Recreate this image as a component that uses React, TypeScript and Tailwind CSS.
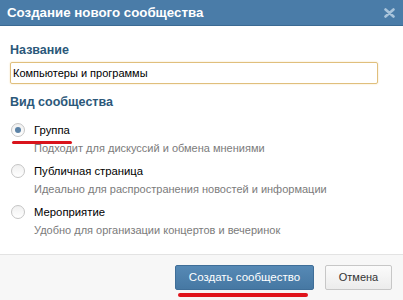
import React from "react";

function Radio({ checked }: { checked?: boolean }) {
  return (
    <div className="w-[14px] h-[14px] rounded-full border border-[#c5c5c5] bg-gradient-to-b from-[#f0f0f0] to-white flex items-center justify-center shrink-0">
      {checked && <div className="w-[6px] h-[6px] rounded-full bg-[#5b82a6]" />}
    </div>
  );
}

function Option({
  title,
  desc,
  checked,
  underline,
}: {
  title: string;
  desc: string;
  checked?: boolean;
  underline?: boolean;
}) {
  return (
    <div className="relative flex flex-col">
      <div className="flex items-center h-[18px]">
        <div className="w-[34px] pl-[11px] shrink-0">
          <Radio checked={checked} />
        </div>
        <span className="text-[11.3px] text-black">{title}</span>
      </div>
      {underline && (
        <div className="absolute left-[12px] top-[20px] w-[60px] h-[3px] rounded-full bg-[#d9141c]" />
      )}
      <div className="pl-[34px] text-[11px] text-[#7b7b7b] mt-[1px] leading-[16px]">{desc}</div>
    </div>
  );
}

export default function App() {
  return (
    <div
      className="w-[403px] h-[300px] flex flex-col bg-white overflow-hidden"
      style={{ fontFamily: '"Liberation Sans", Tahoma, sans-serif' }}
    >
      <div className="h-[26px] bg-[#4a7ca8] border-b border-[#3b6a93] flex items-center justify-between pl-[7px] pr-[8px] shrink-0">
        <span className="text-white font-bold text-[13.3px]">Создание нового сообщества</span>
        <svg width="11" height="10" viewBox="0 0 11 10">
          <path d="M1.5 1.5 L9.5 8.5 M9.5 1.5 L1.5 8.5" stroke="#a9c4db" strokeWidth="2.6" strokeLinecap="round" />
        </svg>
      </div>
      <div className="flex-1 px-[10px] pt-[16px]">
        <div className="text-[12.5px] font-bold text-[#2b587a] leading-[16px]">Название</div>
        <div className="mt-[4px] h-[22px] w-[368px] border border-[#e0bf7c] rounded-[2px] shadow-[0_0_2px_#f1deb2] flex items-center pl-[2px]">
          <span className="text-[11px] text-black">Компьютеры и программы</span>
        </div>
        <div className="mt-[10px] text-[12.5px] font-bold text-[#2b587a] leading-[16px]">Вид сообщества</div>
        <div className="mt-[11px] flex flex-col gap-[6px] -ml-[10px]">
          <Option title="Группа" desc="Подходит для дискуссий и обмена мнениями" checked underline />
          <Option title="Публичная страница" desc="Идеально для распространения новостей и информации" />
          <Option title="Мероприятие" desc="Удобно для организации концертов и вечеринок" />
        </div>
      </div>
      <div className="h-[46px] bg-[#f7f7f7] border-t border-[#e3e3e3] flex items-start justify-end pt-[10px] pr-[11px] gap-[11px] shrink-0">
        <div className="relative">
          <div className="w-[139px] h-[25px] rounded-[2px] bg-gradient-to-b from-[#5689b5] to-[#4678a3] border border-[#3f6e98] flex items-center justify-center text-white text-[11.5px]">
            Создать сообщество
          </div>
          <div className="absolute left-[3px] top-[28px] w-[130px] h-[4px] rounded-full bg-[#e0141c]" />
        </div>
        <div className="w-[67px] h-[25px] rounded-[2px] bg-gradient-to-b from-[#fbfbfb] to-[#ececec] border border-[#c7c7c7] flex items-center justify-center text-[#333] text-[11px]">
          Отмена
        </div>
      </div>
    </div>
  );
}
